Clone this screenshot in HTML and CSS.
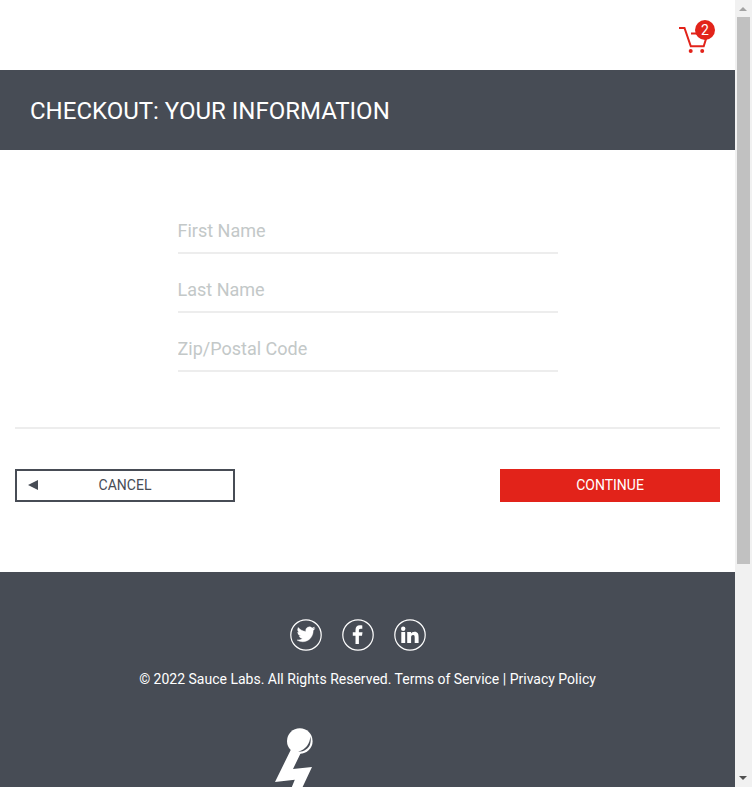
FILE: index.html
```html
<!DOCTYPE html>
<html lang="en">
<head>
<meta charset="utf-8">
<meta name="viewport" content="width=device-width, initial-scale=1">
<title>Checkout: Your Information</title>
<link rel="stylesheet" href="styles.css">
</head>
<body>
<div class="viewport">
  <div class="page">
    <header class="topbar">
      <a class="cart" href="#cart" aria-label="Cart">
        <svg class="cart-icon" width="32" height="30" viewBox="0 0 32 30" fill="none" stroke="#e2231a" stroke-width="2" aria-hidden="true">
          <path d="M0 4h5.500l6.300 18.300h12.900l4-12.800H12"/>
          <circle cx="11.700" cy="27" r="2" fill="#e2231a" stroke="none"/>
          <circle cx="23.200" cy="27" r="2" fill="#e2231a" stroke="none"/>
        </svg>
        <span class="badge">2</span>
      </a>
    </header>
    <h1 class="title">Checkout: Your Information</h1>
    <main>
      <form class="checkout">
        <div class="fields">
          <input class="field" type="text" placeholder="First Name" aria-label="First Name">
          <input class="field" type="text" placeholder="Last Name" aria-label="Last Name">
          <input class="field" type="text" placeholder="Zip/Postal Code" aria-label="Zip/Postal Code">
        </div>
        <div class="actions">
          <button class="btn btn-cancel" type="button">
            <svg class="arrow" width="10" height="10" viewBox="0 0 10 10" aria-hidden="true"><path d="M0 5L10 0v10z" fill="#474c55"/></svg>
            Cancel
          </button>
          <button class="btn btn-continue" type="submit">Continue</button>
        </div>
      </form>
    </main>
    <footer class="footer">
      <nav class="social" aria-label="Social">
        <a href="#twitter" aria-label="Twitter">
          <svg width="32" height="32" viewBox="0 0 32 32" aria-hidden="true"><circle cx="16" cy="16" r="15.200" fill="none" stroke="#fff" stroke-width="1.200"/><path transform="translate(7 6) scale(.75 .77)" fill="#fff" stroke="#fff" stroke-width=".5" d="M23.950 4.570a10 10 0 0 1-2.820.77 4.960 4.960 0 0 0 2.160-2.720c-.95.550-2 .95-3.130 1.180a4.920 4.920 0 0 0-8.380 4.480C7.690 8.090 4.070 6.130 1.640 3.160a4.920 4.920 0 0 0 1.520 6.570 4.900 4.900 0 0 1-2.230-.610v.06a4.920 4.920 0 0 0 3.950 4.830 5 5 0 0 1-2.210.080 4.940 4.940 0 0 0 4.600 3.420A9.870 9.870 0 0 1 0 19.540a13.990 13.990 0 0 0 7.550 2.210c9.050 0 14-7.500 14-13.980 0-.210 0-.420-.02-.630a9.940 9.940 0 0 0 2.420-2.570z"/></svg>
        </a>
        <a href="#facebook" aria-label="Facebook">
          <svg width="32" height="32" viewBox="0 0 32 32" aria-hidden="true"><circle cx="16" cy="16" r="15.200" fill="none" stroke="#fff" stroke-width="1.200"/><path fill="#fff" d="M13.500 25v-8.300H10.800v-3.500h2.700v-2.300C13.500 8 15 6.300 17.800 6.300c1 0 1.900.1 2.500.2v3.300h-1.500c-1.500 0-1.900.7-1.900 1.700v1.700h3.600l-.5 3.500h-3.100V25z"/></svg>
        </a>
        <a href="#linkedin" aria-label="LinkedIn">
          <svg width="32" height="32" viewBox="0 0 32 32" fill="#fff" aria-hidden="true"><circle cx="16" cy="16" r="15.200" fill="none" stroke="#fff" stroke-width="1.200"/><circle cx="9.200" cy="9.700" r="2.200"/><path d="M7.300 13h3.900v11H7.300zM13.200 13h3.800v1.500c.6-1 1.800-1.800 3.500-1.800 3.500 0 4.100 2.400 4.100 5.400V24h-3.900v-5.300c0-1.400-.1-2.700-1.600-2.700-1.700 0-2 1.200-2 2.600V24h-3.900z"/></svg>
        </a>
      </nav>
      <p class="copy">© 2022 Sauce Labs. All Rights Reserved. Terms of Service | Privacy Policy</p>
      <svg class="mascot" width="186" height="90" viewBox="0 0 186 90" aria-hidden="true">
        <circle cx="24.800" cy="13" r="12.800" fill="#fff"/>
        <path d="M35.300 8.500c-.3 7-4.300 13-12.300 15.200 6 .3 10.500-3 12-7.200.9-3 .9-5.500.3-8z" fill="#474c55"/>
        <path d="M16.200 21L0 54l19.800-2.300L5 88h9l23-49-19 2 8-16.500z" fill="#fff"/>
      </svg>
    </footer>
  </div>
  <div class="scrollbar" aria-hidden="true">
    <svg width="17" height="17" viewBox="0 0 17 17"><path d="M4 11l4-4 4 4z" fill="#a3a3a3"/></svg>
    <div class="track"><div class="thumb"></div></div>
    <svg width="17" height="17" viewBox="0 0 17 17"><path d="M4 6h8l-4 4z" fill="#505050"/></svg>
  </div>
</div>
</body>
</html>
```
FILE: styles.css
```css
* { box-sizing: border-box; }

body {
  margin: 0;
  background: #fff;
  color: #474c55;
  font-family: Roboto, "Liberation Sans", sans-serif;
  font-size: 14px;
}

.viewport {
  display: flex;
  height: 100vh;
  overflow: hidden;
}

.page {
  flex: 1;
  min-width: 0;
  display: flex;
  flex-direction: column;
  overflow: hidden;
}

.topbar {
  flex: none;
  display: flex;
  justify-content: flex-end;
  height: 70px;
  padding: 20px;
}

.cart {
  position: relative;
  width: 36px;
  height: 36px;
  padding-top: 4px;
  text-decoration: none;
}

.cart-icon { display: block; }

.badge {
  position: absolute;
  top: 0;
  right: 0;
  width: 20px;
  height: 20px;
  border-radius: 50%;
  background: #e2231a;
  color: #fff;
  line-height: 20px;
  text-align: center;
}

.title {
  flex: none;
  margin: 0;
  padding: 26px 30px 24px;
  background: #474c55;
  color: #fff;
  font-size: 24px;
  font-weight: 400;
  line-height: 30px;
  text-transform: uppercase;
}

main { flex: none; }

.checkout { padding: 60px 15px 70px; }

.fields {
  display: flex;
  flex-direction: column;
  gap: 15px;
  max-width: 380px;
  margin: 0 auto 55px;
}

.field {
  width: 100%;
  height: 44px;
  padding: 0 0 2px;
  border: 0;
  border-bottom: 2px solid #ededed;
  background: none;
  color: #474c55;
  font: inherit;
  font-size: 18px;
}

.field::placeholder {
  color: #c3c8c8;
  opacity: 1;
}

.actions {
  display: flex;
  justify-content: space-between;
  gap: 20px;
  padding-top: 40px;
  border-top: 2px solid #ededed;
}

.btn {
  width: 220px;
  height: 33px;
  padding: 0 0 2px;
  border: 2px solid #474c55;
  background: #fff;
  color: #474c55;
  font: inherit;
  text-transform: uppercase;
}

.btn-cancel { position: relative; }

.arrow {
  position: absolute;
  top: 9px;
  left: 11px;
}

.btn-continue {
  border-color: #e2231a;
  background: #e2231a;
  color: #fff;
}

.footer {
  flex: none;
  display: flex;
  flex-direction: column;
  align-items: center;
  padding-top: 47px;
  background: #474c55;
  color: #fff;
}

.social {
  display: flex;
  gap: 20px;
  padding-right: 20px;
}

.social svg { display: block; }

.copy {
  margin: 20px 15px 41px;
  line-height: 16px;
}

.mascot { display: block; }

.scrollbar {
  flex: none;
  display: flex;
  flex-direction: column;
  width: 17px;
  background: #f1f1f1;
}

.track {
  flex: 1;
  padding: 0 2px;
}

.thumb {
  height: 72.6%;
  background: #c1c1c1;
}
```
